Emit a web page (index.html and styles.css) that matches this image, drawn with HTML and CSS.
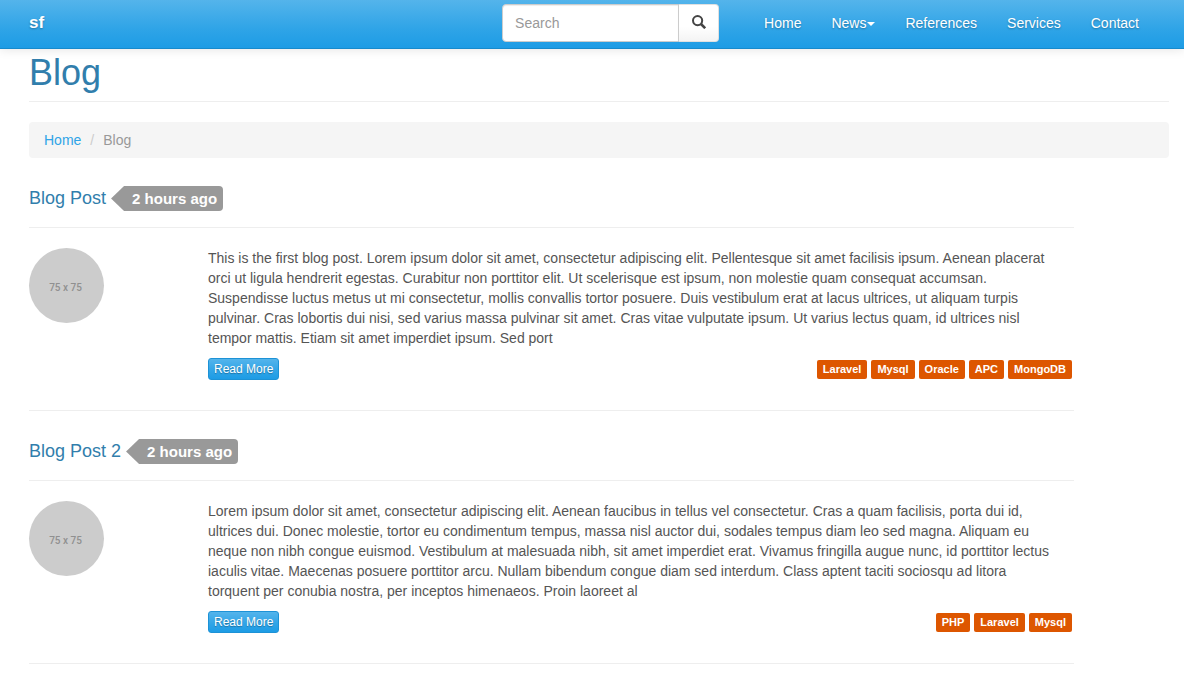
FILE: index.html
```html
<!DOCTYPE html>
<html lang="en">
<head>
<meta charset="utf-8">
<meta name="viewport" content="width=device-width, initial-scale=1">
<title>Blog</title>
<link rel="stylesheet" href="styles.css">
</head>
<body>
<header class="navbar">
  <a class="brand" href="#">sf</a>
  <form class="search" role="search">
    <input class="search-input" type="text" placeholder="Search" aria-label="Search">
    <button class="search-button" type="button" aria-label="Submit search">
      <svg class="search-icon" viewBox="0 0 14 14" aria-hidden="true">
        <circle cx="5.6" cy="5.6" r="4.6" fill="none" stroke="#444" stroke-width="2"/>
        <path d="M9 9l4.2 4.2" fill="none" stroke="#444" stroke-width="2.6"/>
      </svg>
    </button>
  </form>
  <nav class="nav">
    <a class="nav-link" href="#">Home</a>
    <a class="nav-link" href="#">News<span class="caret"></span></a>
    <a class="nav-link" href="#">References</a>
    <a class="nav-link" href="#">Services</a>
    <a class="nav-link" href="#">Contact</a>
  </nav>
</header>
<main class="container">
  <h1 class="page-title">Blog</h1>
  <nav class="breadcrumb" aria-label="Breadcrumb">
    <a class="breadcrumb-link" href="#">Home</a>
    <span class="breadcrumb-separator">/</span>
    <span class="breadcrumb-current">Blog</span>
  </nav>
  <div class="posts">
    <article class="post">
      <header class="post-header">
        <h4 class="post-title">Blog Post</h4>
        <span class="time-tag">2 hours ago</span>
      </header>
      <div class="post-body">
        <div class="post-media"><div class="avatar">75 x 75</div></div>
        <div class="post-content">
          <p class="post-text">This is the first blog post. Lorem ipsum dolor sit amet, consectetur adipiscing elit. Pellentesque sit amet facilisis ipsum. Aenean placerat orci ut ligula hendrerit egestas. Curabitur non porttitor elit. Ut scelerisque est ipsum, non molestie quam consequat accumsan. Suspendisse luctus metus ut mi consectetur, mollis convallis tortor posuere. Duis vestibulum erat at lacus ultrices, ut aliquam turpis pulvinar. Cras lobortis dui nisi, sed varius massa pulvinar sit amet. Cras vitae vulputate ipsum. Ut varius lectus quam, id ultrices nisl tempor mattis. Etiam sit amet imperdiet ipsum. Sed port</p>
          <div class="post-actions">
            <a class="read-more" href="#">Read More</a>
            <div class="labels">
              <span class="label">Laravel</span>
              <span class="label">Mysql</span>
              <span class="label">Oracle</span>
              <span class="label">APC</span>
              <span class="label">MongoDB</span>
            </div>
          </div>
        </div>
      </div>
    </article>
    <article class="post">
      <header class="post-header">
        <h4 class="post-title">Blog Post 2</h4>
        <span class="time-tag">2 hours ago</span>
      </header>
      <div class="post-body">
        <div class="post-media"><div class="avatar">75 x 75</div></div>
        <div class="post-content">
          <p class="post-text">Lorem ipsum dolor sit amet, consectetur adipiscing elit. Aenean faucibus in tellus vel consectetur. Cras a quam facilisis, porta dui id, ultrices dui. Donec molestie, tortor eu condimentum tempus, massa nisl auctor dui, sodales tempus diam leo sed magna. Aliquam eu neque non nibh congue euismod. Vestibulum at malesuada nibh, sit amet imperdiet erat. Vivamus fringilla augue nunc, id porttitor lectus iaculis vitae. Maecenas posuere porttitor arcu. Nullam bibendum congue diam sed interdum. Class aptent taciti sociosqu ad litora torquent per conubia nostra, per inceptos himenaeos. Proin laoreet al</p>
          <div class="post-actions">
            <a class="read-more" href="#">Read More</a>
            <div class="labels">
              <span class="label">PHP</span>
              <span class="label">Laravel</span>
              <span class="label">Mysql</span>
            </div>
          </div>
        </div>
      </div>
    </article>
  </div>
</main>
</body>
</html>
```
FILE: styles.css
```css
* {
  box-sizing: border-box;
}

body {
  margin: 0;
  background: #fff;
  color: #555;
  font-family: "Liberation Sans", Arial, sans-serif;
  font-size: 14px;
  line-height: 20px;
}

a {
  color: #2fa4e7;
  text-decoration: none;
}

.navbar {
  display: flex;
  align-items: flex-start;
  padding: 4px 30px 6px 29px;
  border-bottom: 1px solid #178acc;
  background: linear-gradient(#54b4eb, #2fa4e7 60%, #1d9ce5);
  box-shadow: 0 1px 10px rgba(0, 0, 0, 0.1);
}

.brand {
  margin: 9px auto 0 0;
  color: #fff;
  font-size: 17px;
  font-weight: bold;
  text-shadow: 0 1px 2px rgba(0, 0, 0, 0.3);
}

.search {
  display: flex;
  width: 217px;
  height: 38px;
  margin-right: 30px;
}

.search-input {
  flex: 1;
  min-width: 0;
  padding: 8px 12px;
  border: 1px solid #ccc;
  border-radius: 4px 0 0 4px;
  background: #fff;
  box-shadow: inset 0 1px 1px rgba(0, 0, 0, 0.075);
  color: #555;
  font: inherit;
}

.search-input::placeholder {
  color: #999;
  opacity: 1;
}

.search-button {
  display: flex;
  align-items: center;
  justify-content: center;
  width: 40px;
  padding: 0 0 2px;
  border: 1px solid #e0e0e0;
  border-left: 0;
  border-radius: 0 4px 4px 0;
  background: linear-gradient(#fff, #fff 60%, #f4f4f4);
}

.search-icon {
  width: 14px;
  height: 14px;
}

.nav {
  display: flex;
  margin-top: 9px;
}

.nav-link {
  display: flex;
  align-items: center;
  padding: 0 15px;
  color: #fff;
  text-shadow: 0 1px 2px rgba(0, 0, 0, 0.3);
}

.caret {
  margin: 2px 0 0 1px;
  border-top: 4px solid #fff;
  border-right: 4px solid transparent;
  border-left: 4px solid transparent;
}

.container {
  padding: 4px 15px 0 29px;
}

.page-title {
  margin: 0 0 20px;
  padding-bottom: 8px;
  border-bottom: 1px solid #eee;
  color: #317eac;
  font-size: 36px;
  font-weight: normal;
  line-height: 40px;
}

.breadcrumb {
  display: flex;
  gap: 9px;
  padding: 8px 15px;
  border-radius: 4px;
  background: #f5f5f5;
}

.breadcrumb-separator {
  color: #ccc;
}

.breadcrumb-current {
  color: #999;
}

.posts {
  width: 91.6667%;
}

.post {
  padding: 28px 0 30px;
  border-bottom: 1px solid #eee;
}

.post-header {
  display: flex;
  align-items: center;
  gap: 5px;
  margin-bottom: 20px;
  padding-bottom: 16px;
  border-bottom: 1px solid #eee;
}

.post-title {
  margin: 0;
  padding-bottom: 2px;
  color: #317eac;
  font-size: 18px;
  font-weight: normal;
}

.time-tag {
  padding: 3px 6px 2px 21px;
  border-radius: 0 4px 4px 0;
  background: #999;
  clip-path: polygon(0 50%, 13px 0, 100% 0, 100% 100%, 13px 100%);
  color: #fff;
  font-size: 15px;
  font-weight: bold;
}

.post-body {
  display: flex;
}

.post-media {
  flex: 0 0 179px;
}

.avatar {
  display: flex;
  align-items: center;
  justify-content: center;
  width: 75px;
  height: 75px;
  padding: 5px 2px 0 0;
  border-radius: 50%;
  background: #ccc;
  color: #909090;
  font-family: Roboto, sans-serif;
  font-size: 10px;
  font-weight: 500;
}

.post-content {
  flex: 1;
  min-width: 0;
}

.post-text {
  margin: 0 0 10px;
  padding-right: 15px;
}

.post-actions {
  display: flex;
  align-items: center;
  justify-content: space-between;
}

.read-more {
  padding: 1px 5px;
  border: 1px solid #1d92d6;
  border-radius: 3px;
  background: linear-gradient(#54b4eb, #2fa4e7 60%, #1d9ce5);
  color: #fff;
  font-size: 12px;
  line-height: 18px;
  text-shadow: 0 1px 1px rgba(0, 0, 0, 0.3);
}

.labels {
  display: flex;
  gap: 4px;
  padding: 1px 2px 0 0;
}

.label {
  padding: 0 6px;
  border-radius: 2px;
  background: #dd5600;
  color: #fff;
  font-size: 11px;
  font-weight: bold;
  line-height: 19px;
}
```
